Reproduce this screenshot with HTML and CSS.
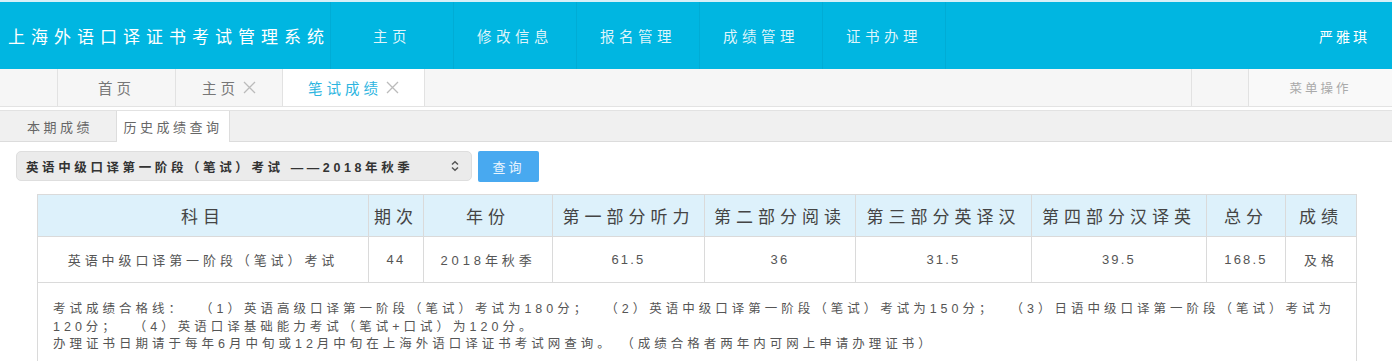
FILE: index.html
```html
<!DOCTYPE html>
<html lang="zh-CN">
<head>
    <meta charset="UTF-8">
    <title>上海外语口译证书考试管理系统</title>
    <link rel="stylesheet" href="styles.css">
</head>
<body>
    <header class="topbar">
        <div class="brand">上海外语口译证书考试管理系统</div>
        <nav class="menu">
            <a href="#">主页</a>
            <a href="#">修改信息</a>
            <a href="#">报名管理</a>
            <a href="#">成绩管理</a>
            <a href="#">证书办理</a>
        </nav>
        <div class="user">严雅琪</div>
    </header>

    <div class="tabbar">
        <div class="tab tab-blank"></div>
        <div class="tab tab-home">首页</div>
        <div class="tab tab-main">主页
            <svg class="close" width="13" height="13" viewBox="0 0 13 13"><path d="M1 1 L12 12 M12 1 L1 12" stroke="#bbb" stroke-width="1.3"/></svg>
        </div>
        <div class="tab tab-score active">笔试成绩
            <svg class="close" width="13" height="13" viewBox="0 0 13 13"><path d="M1 1 L12 12 M12 1 L1 12" stroke="#bbb" stroke-width="1.3"/></svg>
        </div>
        <div class="tab-fill"></div>
        <div class="tab tab-gap"></div>
        <div class="tab tab-op">菜单操作</div>
    </div>

    <div class="subtabs">
        <div class="subtab">本期成绩</div>
        <div class="subtab active">历史成绩查询</div>
    </div>

    <div class="query">
        <div class="select">
            <span>英语中级口译第一阶段（笔试）考试 ——2018年秋季</span>
            <svg class="arrows" width="10" height="12" viewBox="0 0 10 12">
                <path d="M2 4.5 L5 1.8 L8 4.5 M2 7.5 L5 10.2 L8 7.5" fill="none" stroke="#555" stroke-width="1.5"/>
            </svg>
        </div>
        <button class="btn">查询</button>
    </div>

    <table class="scores">
        <colgroup>
            <col style="width:331px"><col style="width:55px"><col style="width:129px">
            <col style="width:152px"><col style="width:151px"><col style="width:176px">
            <col style="width:175px"><col style="width:79px"><col style="width:71px">
        </colgroup>
        <thead>
            <tr>
                <th>科目</th><th>期次</th><th>年份</th><th>第一部分听力</th><th>第二部分阅读</th>
                <th>第三部分英译汉</th><th>第四部分汉译英</th><th>总分</th><th>成绩</th>
            </tr>
        </thead>
        <tbody>
            <tr class="data">
                <td>英语中级口译第一阶段（笔试）考试</td><td class="num">44</td><td>2018年秋季</td>
                <td class="num">61.5</td><td class="num">36</td><td class="num">31.5</td>
                <td class="num">39.5</td><td class="num">168.5</td><td>及格</td>
            </tr>
            <tr>
                <td colspan="9" class="notes">
                    考试成绩合格线：&nbsp;&nbsp;（1）英语高级口译第一阶段（笔试）考试为180分；&nbsp;&nbsp;（2）英语中级口译第一阶段（笔试）考试为150分；&nbsp;&nbsp;（3）日语中级口译第一阶段（笔试）考试为<br>
                    120分；&nbsp;&nbsp;（4）英语口译基础能力考试（笔试+口试）为120分。<br>
                    办理证书日期请于每年6月中旬或12月中旬在上海外语口译证书考试网查询。&nbsp;（成绩合格者两年内可网上申请办理证书）
                </td>
            </tr>
        </tbody>
    </table>
</body>
</html>
```

FILE: styles.css
```css
body {
    margin: 0;
    font-family: "Liberation Sans", "Noto Sans CJK SC", sans-serif;
    background: #fff;
    color: #555;
}
.topbar {
    display: flex;
    align-items: center;
    height: 67px;
    border-top: 2px solid #d6f0f8;
    background: #00b6e1;
    color: #fff;
}
.brand {
    width: 322px;
    padding-left: 8px;
    font-size: 17px;
    letter-spacing: 6px;
    white-space: nowrap;
}
.menu {
    display: flex;
    height: 100%;
}
.menu a {
    display: flex;
    align-items: center;
    justify-content: center;
    width: 122px;
    border-left: 1px solid rgba(0, 0, 0, 0.05);
    color: rgba(255, 255, 255, 0.88);
    text-decoration: none;
    font-size: 14.5px;
    letter-spacing: 4.5px;
}
.menu a:last-child {
    border-right: 1px solid rgba(0, 0, 0, 0.05);
}
.user {
    margin-left: auto;
    padding-right: 22px;
    font-size: 14px;
    letter-spacing: 3px;
}

/* page tabs */
.tabbar {
    display: flex;
    height: 37px;
    background: #f6f6f6;
    border-bottom: 1px solid #e3e3e3;
}
.tab {
    display: flex;
    align-items: center;
    justify-content: center;
    border-right: 1px solid #e2e2e2;
    font-size: 14.5px;
    letter-spacing: 4px;
    color: #777;
}
.tab-blank { width: 57px; }
.tab-home { width: 117px; }
.tab-main { width: 106px; }
.tab-score { width: 141px; }
.tab.active {
    background: #fff;
    color: #2db5df;
}
.close {
    margin-left: 4px;
}
.tab-fill { flex: 1; border-right: 1px solid #e2e2e2; }
.tab-gap { width: 56px; }
.tab-op {
    width: 143px;
    border-right: none;
    background: #f9f9f9;
    font-size: 12.5px;
    letter-spacing: 3px;
    color: #aaa;
}

/* sub tabs */
.subtabs {
    display: flex;
    margin-top: 3px;
    height: 30px;
    background: #f0f0f0;
    border-top: 1px solid #e2e2e2;
    border-bottom: 1px solid #dcdcdc;
}
.subtab {
    display: flex;
    align-items: center;
    justify-content: center;
    width: 112px;
    font-size: 13px;
    letter-spacing: 3.5px;
    color: #666;
}
.subtab:first-child { margin-left: 4px; }
.subtab.active {
    background: #fff;
    border-left: 1px solid #ddd;
    border-right: 1px solid #ddd;
    margin-bottom: -1px;
}

/* query row */
.query {
    display: flex;
    gap: 6px;
    padding: 9px 0 0 16px;
}
.select {
    display: flex;
    align-items: center;
    justify-content: space-between;
    width: 434px;
    height: 28px;
    padding: 0 11px 0 9px;
    background: #ebebeb;
    border: 1px solid #dedede;
    border-radius: 5px;
    font-size: 12.5px;
    font-weight: bold;
    letter-spacing: 3.6px;
    color: #333;
    white-space: nowrap;
}
.btn {
    width: 61px;
    height: 31px;
    border: none;
    border-radius: 2px;
    background: #48a9f0;
    color: #e8f4fe;
    font-family: inherit;
    font-size: 13px;
    letter-spacing: 3px;
}

/* score table */
.scores {
    margin: 12px 0 0 37px;
    width: 1319px;
    table-layout: fixed;
    border-collapse: collapse;
}
.scores th,
.scores td {
    border: 1px solid #dadada;
    text-align: center;
    white-space: nowrap;
}
.scores th {
    height: 41px;
    padding: 0;
    background: #ddf1fb;
    font-weight: normal;
    font-size: 17px;
    letter-spacing: 5px;
    color: #444;
}
.data td {
    height: 45px;
    padding: 0;
    font-size: 13px;
    letter-spacing: 3.9px;
    color: #555;
}
.data td.num {
    letter-spacing: 2.2px;
}
.scores td.notes {
    text-align: left;
    padding: 18px 0 30px 15px;
    font-size: 12.5px;
    line-height: 17.5px;
    letter-spacing: 4px;
    color: #555;
}
```
